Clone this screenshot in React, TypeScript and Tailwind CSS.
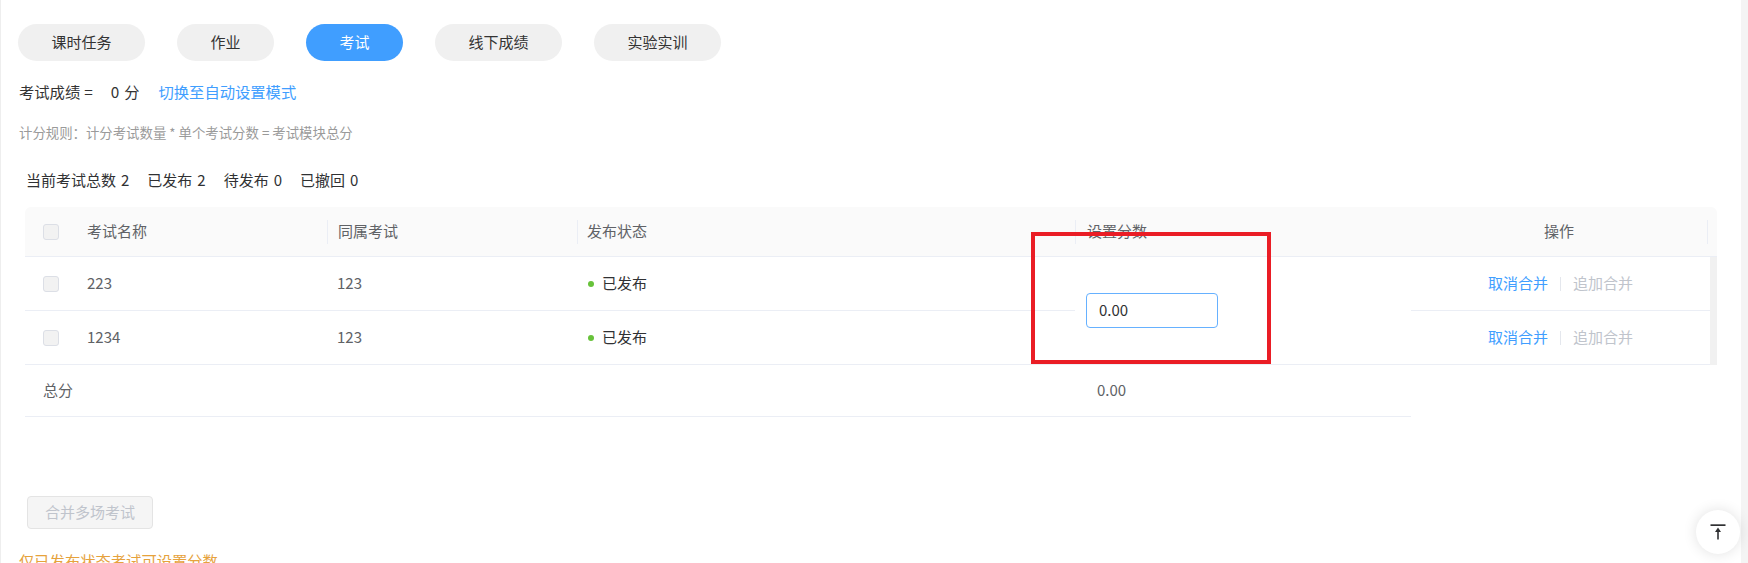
import React from "react";

const COLS = "grid grid-cols-[52px_250px_250px_498px_336px_299px_7px]";

function Checkbox() {
  return <span className="block w-[16px] h-[16px] rounded-[3px] border border-[#dcdfe6] bg-[#f2f2f2]" />;
}

function Sep() {
  return <span className="block w-px h-[24px] bg-[#ebeef5]" />;
}

function BackTopIcon() {
  return (
    <svg width="44" height="44" viewBox="0 0 44 44">
      <rect x="14.5" y="14.3" width="15" height="1.7" fill="#303133" />
      <path d="M22 17.6 L25 22 L19 22 Z" fill="#303133" />
      <rect x="21.2" y="21" width="1.6" height="8.5" fill="#303133" />
    </svg>
  );
}

export default function App() {
  const tabs = ["课时任务", "作业", "考试", "线下成绩", "实验实训"];
  const rows = [
    { name: "223", group: "123" },
    { name: "1234", group: "123" },
  ];
  const stats: [string, string][] = [
    ["当前考试总数", "2"],
    ["已发布", "2"],
    ["待发布", "0"],
    ["已撤回", "0"],
  ];
  return (
    <div
      className="relative w-[1748px] h-[563px] overflow-hidden bg-white flex text-[#303133]"
      style={{ fontFamily: '"Noto Sans CJK SC", "Noto Sans", sans-serif' }}
    >
      <div className="w-px shrink-0 bg-[#eeeeee]" />
      <div className="flex-1 flex flex-col pl-[17px]">
        {/* tabs */}
        <div className="shrink-0 mt-[24px] flex gap-[32px]">
          {tabs.map((t) => (
            <div
              key={t}
              className={
                t === "考试"
                  ? "h-[37px] px-[33.5px] rounded-full bg-[#409eff] text-white text-[15px] flex items-center"
                  : "h-[37px] px-[33.5px] rounded-full bg-[#f0f0f0] text-[#333333] text-[15px] flex items-center"
              }
            >
              {t}
            </div>
          ))}
        </div>

        {/* score line */}
        <div className="shrink-0 mt-[20px] ml-[1px] h-[20px] flex items-center text-[15.3px] leading-[20px] text-[#333333]">
          <span>考试成绩</span>
          <span className="ml-[4px]">=</span>
          <span className="ml-[18px]">0</span>
          <span className="ml-[5px]">分</span>
          <span className="ml-[19px] text-[#409eff]">切换至自动设置模式</span>
        </div>

        {/* rule */}
        <div className="shrink-0 mt-[22px] ml-[1px] h-[18px] flex items-center text-[13.4px] leading-[18px] text-[#9a9a9a] whitespace-pre">
          计分规则：计分考试数量 * 单个考试分数 = 考试模块总分
        </div>

        {/* stats */}
        <div className="shrink-0 mt-[29px] ml-[8px] h-[20px] flex items-center gap-[18px] text-[15px] leading-[20px] text-[#303133]">
          {stats.map(([l, n]) => (
            <span key={l} className="flex">
              <span>{l}</span>
              <span className="ml-[5px]">{n}</span>
            </span>
          ))}
        </div>

        {/* table */}
        <div className="shrink-0 mt-[17px] ml-[7px] w-[1692px] text-[15px]">
          {/* header */}
          <div className={`${COLS} h-[50px] bg-[#fafafa] rounded-t-[6px] border-b border-[#ebeef5] text-[#606266]`}>
            <div className="flex items-center justify-center">
              <Checkbox />
            </div>
            <div className="flex items-center pl-[10px]">考试名称</div>
            <div className="flex items-center">
              <Sep />
              <span className="pl-[10px]">同属考试</span>
            </div>
            <div className="flex items-center">
              <Sep />
              <span className="pl-[9px]">发布状态</span>
            </div>
            <div className="flex items-center">
              <Sep />
              <span className="pl-[11px]">设置分数</span>
            </div>
            <div className="flex items-center">
              <span className="flex-1 text-center">操作</span>
              <span className="mr-[2px]">
                <Sep />
              </span>
            </div>
            <div />
          </div>

          {/* body */}
          <div className={`${COLS} grid-rows-[54px_54px]`}>
            {rows.map((r, i) => (
              <React.Fragment key={r.name}>
                <div
                  className="flex items-center justify-center border-b border-[#ebeef5]"
                  style={{ gridRow: i + 1, gridColumn: 1 }}
                >
                  <Checkbox />
                </div>
                <div
                  className="flex items-center pl-[10px] border-b border-[#ebeef5] text-[#606266]"
                  style={{ gridRow: i + 1, gridColumn: 2 }}
                >
                  {r.name}
                </div>
                <div
                  className="flex items-center pl-[10px] border-b border-[#ebeef5] text-[#606266]"
                  style={{ gridRow: i + 1, gridColumn: 3 }}
                >
                  {r.group}
                </div>
                <div
                  className="flex items-center pl-[11px] border-b border-[#ebeef5] text-[#303133]"
                  style={{ gridRow: i + 1, gridColumn: 4 }}
                >
                  <span className="w-[6px] h-[6px] rounded-full bg-[#67c23a]" />
                  <span className="ml-[8px]">已发布</span>
                </div>
                <div
                  className="flex items-center justify-center gap-[12px] border-b border-[#ebeef5]"
                  style={{ gridRow: i + 1, gridColumn: 6 }}
                >
                  <span className="text-[#409eff]">取消合并</span>
                  <span className="w-px h-[14px] bg-[#e4e7ed]" />
                  <span className="text-[#c0c4cc]">追加合并</span>
                </div>
              </React.Fragment>
            ))}
            <div className="row-span-2 col-start-5 row-start-1 flex items-center pl-[11px] border-b border-[#ebeef5]">
              <div className="w-[132px] h-[35px] rounded-[4px] border border-[#66b1ff] flex items-center pl-[12px] text-[#303133]">
                0.00
              </div>
            </div>
            <div className="row-span-2 col-start-7 row-start-1 bg-[#f1f1f1]" />
          </div>

          {/* total */}
          <div className="w-[1386px] h-[52px] border-b border-[#ebeef5] flex items-center text-[#606266]">
            <div className="w-[1050px] pl-[18px]">总分</div>
            <div className="pl-[22px]">0.00</div>
          </div>
        </div>

        {/* merge button */}
        <div className="shrink-0 mt-[79px] ml-[9px] w-[126px] h-[33px] rounded-[4px] border border-[#e4e4e4] bg-[#f5f5f5] text-[#c0c4cc] text-[15px] flex items-center justify-center">
          合并多场考试
        </div>

        <div className="shrink-0 mt-[21px] ml-[1px] text-[15.3px] leading-[20px] text-[#e6a23c]">仅已发布状态考试可设置分数</div>
      </div>
      <div className="w-[7px] shrink-0 bg-[#f4f4f4]" />

      {/* annotation box */}
      <div className="absolute left-[1031px] top-[232px] w-[240px] h-[132px] border-[4px] border-[#ea1d25]" />

      {/* back to top */}
      <div className="absolute left-[1696px] top-[510px] w-[44px] h-[44px] rounded-full bg-white shadow-[0_0_14px_rgba(0,0,0,0.12)]">
        <BackTopIcon />
      </div>
    </div>
  );
}
